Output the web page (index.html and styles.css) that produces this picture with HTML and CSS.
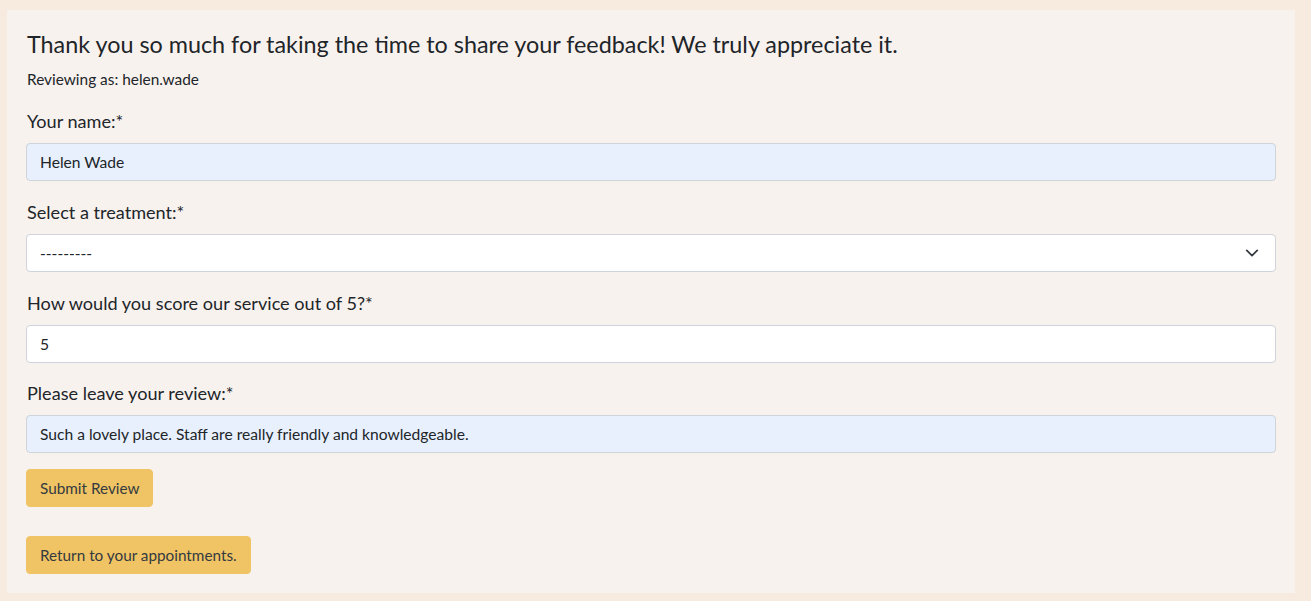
FILE: index.html
```html
<!DOCTYPE html>
<html lang="en">
<head>
<meta charset="utf-8">
<title>Leave a review</title>
<link rel="stylesheet" href="styles.css">
</head>
<body>
<main class="card">
  <h2 class="title">Thank you so much for taking the time to share your feedback! We truly appreciate it.</h2>
  <p class="reviewer">Reviewing as: helen.wade</p>
  <form class="form">
    <div class="field">
      <label class="label" for="name">Your name:*</label>
      <input class="control autofill" id="name" type="text" value="Helen Wade">
    </div>
    <div class="field">
      <label class="label" for="treatment">Select a treatment:*</label>
      <div class="select">
        <span class="select-value">---------</span>
        <svg class="chevron" width="16" height="16" viewBox="0 0 16 16"><path d="M2 5l6 6 6-6" fill="none" stroke="#343a40" stroke-width="2" stroke-linecap="round" stroke-linejoin="round"/></svg>
      </div>
    </div>
    <div class="field">
      <label class="label" for="score">How would you score our service out of 5?*</label>
      <input class="control" id="score" type="text" value="5">
    </div>
    <div class="field last">
      <label class="label" for="review">Please leave your review:*</label>
      <input class="control autofill" id="review" type="text" value="Such a lovely place. Staff are really friendly and knowledgeable.">
    </div>
    <div class="actions">
      <button class="btn" type="button">Submit Review</button>
    </div>
  </form>
  <div class="actions back">
    <button class="btn" type="button">Return to your appointments.</button>
  </div>
</main>
</body>
</html>
```

FILE: styles.css
```css
* { box-sizing: border-box; }
html, body { height: 100%; }
body {
  margin: 0;
  padding: 10px 16px 8px 7px;
  background: #f7eadf;
  font-family: "Lato", "Open Sans", sans-serif;
  color: #212529;
}
.card {
  background: #f8f2ee;
  padding: 21px 19px 19px 19px;
  height: 583px;
}
.title {
  margin: 0;
  font-size: 23.35px;
  font-weight: 400;
  line-height: 27px;
  padding-left: 1px;
}
.reviewer {
  margin: 10px 0 0 0;
  font-size: 15.4px;
  line-height: 22px;
  padding-left: 1px;
}
.form {
  margin-top: 18px;
  display: flex;
  flex-direction: column;
}
.field {
  display: flex;
  flex-direction: column;
  margin-bottom: 18px;
}
.field.last { margin-top: -1px; margin-bottom: 16px; }
.label {
  font-size: 18.1px;
  line-height: 27px;
  margin-bottom: 8px;
  padding-left: 1px;
}
.control, .select {
  display: flex;
  align-items: center;
  width: 100%;
  height: 38px;
  padding: 0 13px;
  font-family: inherit;
  font-size: 15.6px;
  color: #212529;
  background: #fff;
  border: 1px solid #ced4da;
  border-radius: 4px;
  outline: none;
}
.control.autofill { background: #e8f0fe; }
.select { justify-content: space-between; padding-right: 16px; }
.chevron { width: 14px; height: 14px; }
.actions { display: flex; }
.btn {
  height: 38px;
  padding: 0 13px;
  font-family: inherit;
  font-size: 15.3px;
  color: #343a40;
  background: #f0c464;
  border: 1px solid #f0c464;
  border-radius: 4px;
}
.back { margin-top: 29px; }
```
